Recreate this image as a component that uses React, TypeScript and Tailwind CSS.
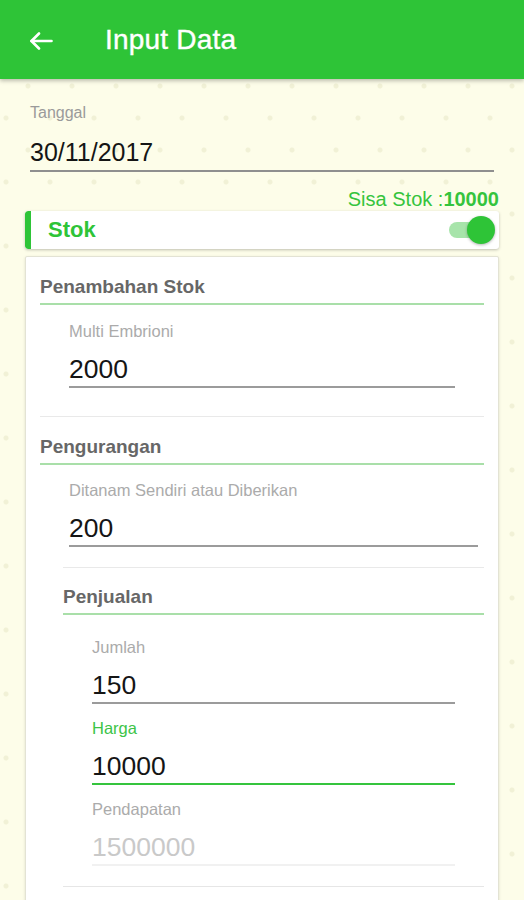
import React from 'react'

const font = { fontFamily: '"Liberation Sans", Arial, sans-serif' }

function BackArrow() {
  return (
    <svg width="24" height="18" viewBox="0 0 24 18" fill="none" stroke="white" strokeWidth="2.6" strokeLinecap="round" strokeLinejoin="round">
      <path d="M22.5 9H2.5" />
      <path d="M10 1.5L2.5 9L10 16.5" />
    </svg>
  )
}

function SectionTitle({ children, className = '' }: { children: React.ReactNode; className?: string }) {
  return (
    <div className={`text-[19px] font-bold leading-[24px] text-[#676767] pb-[4px] border-b-2 border-[#a9dfa9] ${className}`}>
      {children}
    </div>
  )
}

interface FieldProps {
  label: string
  value: string
  focused?: boolean
  disabled?: boolean
  className?: string
}

function Field({ label, value, focused, disabled, className = '' }: FieldProps) {
  const line = focused ? 'border-[#35c43d]' : disabled ? 'border-[#f1f1f1]' : 'border-[#9b9b9b]'
  return (
    <div className={className}>
      <div className={`h-[20px] text-[16.5px] leading-[20px] ${focused ? 'text-[#3cc447]' : 'text-[#ababab]'}`}>{label}</div>
      <div className={`mt-[13px] pb-[2px] border-b-2 ${line}`}>
        <div className={`h-[30px] text-[26.5px] leading-[30px] ${disabled ? 'text-[#c9c9c9]' : 'text-[#151515]'}`}>{value}</div>
      </div>
    </div>
  )
}

export default function App() {
  return (
    <div
      style={font}
      className="min-h-[900px] w-full bg-[#fdfde9] bg-[radial-gradient(circle,#f1f1d6_2px,transparent_3px),radial-gradient(circle,#f1f1d6_2px,transparent_3px)] bg-[length:44px_64px] bg-[position:6px_-10px,28px_22px] overflow-hidden"
    >
      <header className="h-[79px] bg-[#2ec437] flex items-center shadow-[0_2px_4px_rgba(0,0,0,0.25)] relative z-10">
        <div className="ml-[29px] mt-[2px] flex items-center">
          <BackArrow />
        </div>
        <h1 className="ml-[52px] text-[28px] text-white leading-none tracking-[0.2px] [-webkit-text-stroke:0.4px_white]">Input Data</h1>
      </header>

      <main className="px-[25px]">
        <div className="px-[5px] pt-[24px]">
          <div className="h-[20px] text-[16px] leading-[20px] text-[#9a9a9a]">Tanggal</div>
          <div className="mt-[14px] pb-[3px] border-b-2 border-[#8f8f8f]">
            <div className="h-[30px] text-[25px] leading-[30px] text-[#151515]">30/11/2017</div>
          </div>
        </div>

        <div className="mt-[16px] h-[22px] text-right text-[20px] leading-[22px] text-[#35c43d]">
          Sisa Stok :<span className="font-bold">10000</span>
        </div>

        <div className="mt-[1px] h-[38px] bg-white rounded-[3px] flex items-center shadow-[0_1px_3px_rgba(0,0,0,0.25)] overflow-hidden">
          <div className="w-[6px] h-full bg-[#2ec437] rounded-l-[3px]" />
          <div className="ml-[17px] text-[22px] font-bold text-[#2ec437] leading-none">Stok</div>
          <div className="ml-auto mr-[4px] relative w-[46px] h-[28px]">
            <div className="absolute left-0 right-[4px] top-[6px] h-[16px] rounded-full bg-[#a7e4aa]" />
            <div className="absolute right-0 top-0 w-[28px] h-[28px] rounded-full bg-[#2ec437] shadow-[0_1px_3px_rgba(0,0,0,0.3)]" />
          </div>
        </div>

        <section className="mt-[7px] bg-white border border-[#e3e3d4] rounded-[2px] shadow-[0_1px_3px_rgba(0,0,0,0.12)] pl-[14px] pr-[14px] pt-[18px] pb-[40px]">
          <SectionTitle>Penambahan Stok</SectionTitle>
          <Field className="mt-[16px] ml-[29px] w-[386px]" label="Multi Embrioni" value="2000" />

          <div className="mt-[28px] border-t border-[#e9e9e9]" />

          <SectionTitle className="mt-[18px]">Pengurangan</SectionTitle>
          <Field className="mt-[15px] ml-[29px] w-[409px]" label="Ditanam Sendiri atau Diberikan" value="200" />

          <div className="ml-[23px]">
            <div className="mt-[20px] border-t border-[#e9e9e9]" />
            <SectionTitle className="mt-[17px]">Penjualan</SectionTitle>
            <div className="ml-[29px] w-[363px]">
              <Field className="mt-[22px]" label="Jumlah" value="150" />
              <Field className="mt-[14px]" label="Harga" value="10000" focused />
              <Field className="mt-[14px]" label="Pendapatan" value="1500000" disabled />
            </div>
            <div className="mt-[20px] border-t border-[#e6e6e6]" />
          </div>
        </section>
      </main>
    </div>
  )
}
